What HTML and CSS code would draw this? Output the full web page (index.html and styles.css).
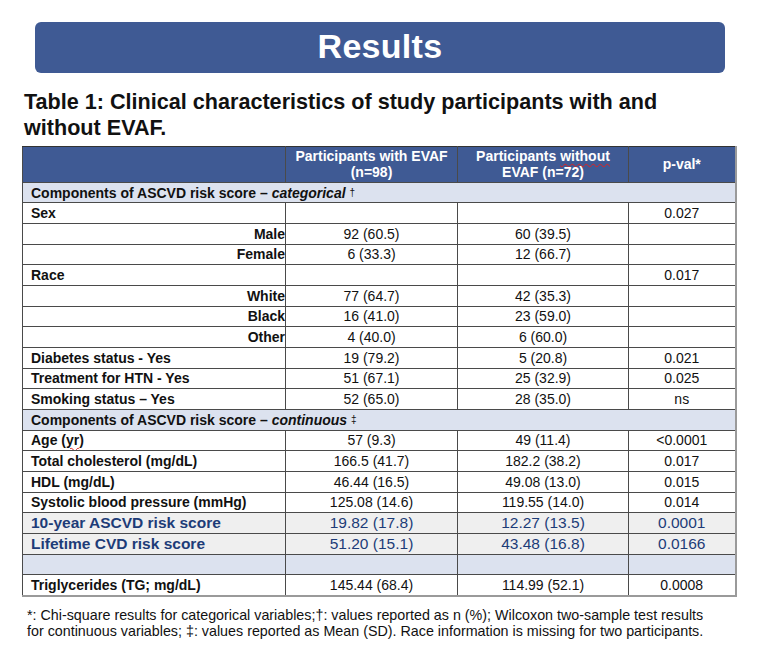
FILE: index.html
```html
<!DOCTYPE html>
<html lang="en">
<head>
    <meta charset="UTF-8">
    <meta name="viewport" content="width=device-width, initial-scale=1.0">
    <title>Results</title>
    <link rel="stylesheet" href="styles.css">
</head>
<body>

<div id="banner">Results</div>

<div id="caption">
    Table 1: Clinical characteristics of study participants with and without EVAF.
</div>

<table id="results">
    <colgroup>
        <col class="c_label">
        <col class="c_with">
        <col class="c_without">
        <col class="c_pval">
    </colgroup>
    <tr class="head">
        <th></th>
        <th>Participants with EVAF<br>(n=98)</th>
        <th>Participants <span class="squiggle">without</span><br>EVAF (n=72)</th>
        <th>p-val*</th>
    </tr>
    <tr class="section">
        <td colspan="4">Components of ASCVD risk score &ndash; <i>categorical</i> <span class="mark">&dagger;</span></td>
    </tr>
    <tr>
        <td class="lable">Sex</td><td></td><td></td><td>0.027</td>
    </tr>
    <tr>
        <td class="lable sub">Male</td><td>92 (60.5)</td><td>60 (39.5)</td><td></td>
    </tr>
    <tr>
        <td class="lable sub">Female</td><td>6 (33.3)</td><td>12 (66.7)</td><td></td>
    </tr>
    <tr>
        <td class="lable">Race</td><td></td><td></td><td>0.017</td>
    </tr>
    <tr>
        <td class="lable sub">White</td><td>77 (64.7)</td><td>42 (35.3)</td><td></td>
    </tr>
    <tr>
        <td class="lable sub">Black</td><td>16 (41.0)</td><td>23 (59.0)</td><td></td>
    </tr>
    <tr>
        <td class="lable sub">Other</td><td>4 (40.0)</td><td>6 (60.0)</td><td></td>
    </tr>
    <tr>
        <td class="lable">Diabetes status - Yes</td><td>19 (79.2)</td><td>5 (20.8)</td><td>0.021</td>
    </tr>
    <tr>
        <td class="lable">Treatment for HTN - Yes</td><td>51 (67.1)</td><td>25 (32.9)</td><td>0.025</td>
    </tr>
    <tr>
        <td class="lable">Smoking status &ndash; Yes</td><td>52 (65.0)</td><td>28 (35.0)</td><td>ns</td>
    </tr>
    <tr class="section">
        <td colspan="4">Components of ASCVD risk score &ndash; <i>continuous</i> <span class="mark">&Dagger;</span></td>
    </tr>
    <tr>
        <td class="lable">Age (<span class="squiggle">yr</span>)</td><td>57 (9.3)</td><td>49 (11.4)</td><td>&lt;0.0001</td>
    </tr>
    <tr>
        <td class="lable">Total cholesterol (mg/dL)</td><td>166.5 (41.7)</td><td>182.2 (38.2)</td><td>0.017</td>
    </tr>
    <tr>
        <td class="lable">HDL (mg/dL)</td><td>46.44 (16.5)</td><td>49.08 (13.0)</td><td>0.015</td>
    </tr>
    <tr>
        <td class="lable">Systolic blood pressure (mmHg)</td><td>125.08 (14.6)</td><td>119.55 (14.0)</td><td>0.014</td>
    </tr>
    <tr class="score">
        <td class="lable">10-year ASCVD risk score</td><td>19.82 (17.8)</td><td>12.27 (13.5)</td><td>0.0001</td>
    </tr>
    <tr class="score">
        <td class="lable">Lifetime CVD risk score</td><td>51.20 (15.1)</td><td>43.48 (16.8)</td><td>0.0166</td>
    </tr>
    <tr class="blank">
        <td></td><td></td><td></td><td></td>
    </tr>
    <tr>
        <td class="lable">Triglycerides (TG; mg/dL)</td><td>145.44 (68.4)</td><td>114.99 (52.1)</td><td>0.0008</td>
    </tr>
</table>

<div id="note">
    *: Chi-square results for categorical variables;&dagger;: values reported as n (%); Wilcoxon two-sample test results<br>
    for continuous variables; &Dagger;: values reported as Mean (SD). Race information is missing for two participants.
</div>

</body>
</html>
```

FILE: styles.css
```css
body{
    margin: 0;
    padding: 22px 0 0 0;
    font-family: "Liberation Sans", Arial, sans-serif;
    color: #111;
    background-color: white;
}
#banner{
    margin-left: 35px;
    width: 690px;
    height: 51px;
    line-height: 49px;
    background-color: #3f5a94;
    border-radius: 6px;
    color: white;
    font-weight: bold;
    font-size: 34px;
    text-align: center;
    letter-spacing: 0.3px;
}
#caption{
    margin: 16px 0 0 24px;
    width: 680px;
    font-weight: bold;
    font-size: 21.6px;
    line-height: 26px;
    color: #111;
}
#results{
    margin: 5px 0 0 22px;
    width: 713px;
    table-layout: fixed;
    border-collapse: collapse;
    font-size: 14px;
    border-left: 1px solid #333;
    border-right: 2px solid #9a9a9a;
    border-bottom: 2px solid #9a9a9a;
}
.c_label{ width: 263px; }
.c_with{ width: 172px; }
.c_without{ width: 171px; }
.c_pval{ width: 107px; }

#results td, #results th{
    border: 1px solid #4a4a4a;
    padding: 0;
    height: 19.67px;
    text-align: center;
    white-space: nowrap;
    overflow: hidden;
}
#results th{
    height: 34.7px;
    background-color: #3f5a94;
    color: white;
    font-weight: bold;
    line-height: 16px;
    vertical-align: middle;
    border-top: 1px solid #333;
}
.squiggle{
    text-decoration: underline wavy #d22;
    text-underline-offset: 2px;
    text-decoration-thickness: 1px;
}
.section td{
    background-color: #dce2ef;
    text-align: left !important;
    padding-left: 8px !important;
    font-weight: bold;
    border-top: 1px solid #8a8a8a;
    border-bottom: 1px solid #8a8a8a;
}
.section i{
    font-weight: bold;
}
.mark{
    font-weight: normal;
    font-size: 10px;
    vertical-align: 2px;
}
#results td.lable{
    text-align: left;
    padding-left: 8px;
    font-weight: bold;
}
#results td.sub{
    text-align: right;
    padding: 0;
}
.score td{
    background-color: #efefef;
    color: #1d3c78;
    font-size: 15.5px;
}
.blank td{
    background-color: #dce2ef;
}
#note{
    margin: 10px 0 0 27px;
    font-size: 14.3px;
    line-height: 16.4px;
    color: #111;
    white-space: nowrap;
}
```
